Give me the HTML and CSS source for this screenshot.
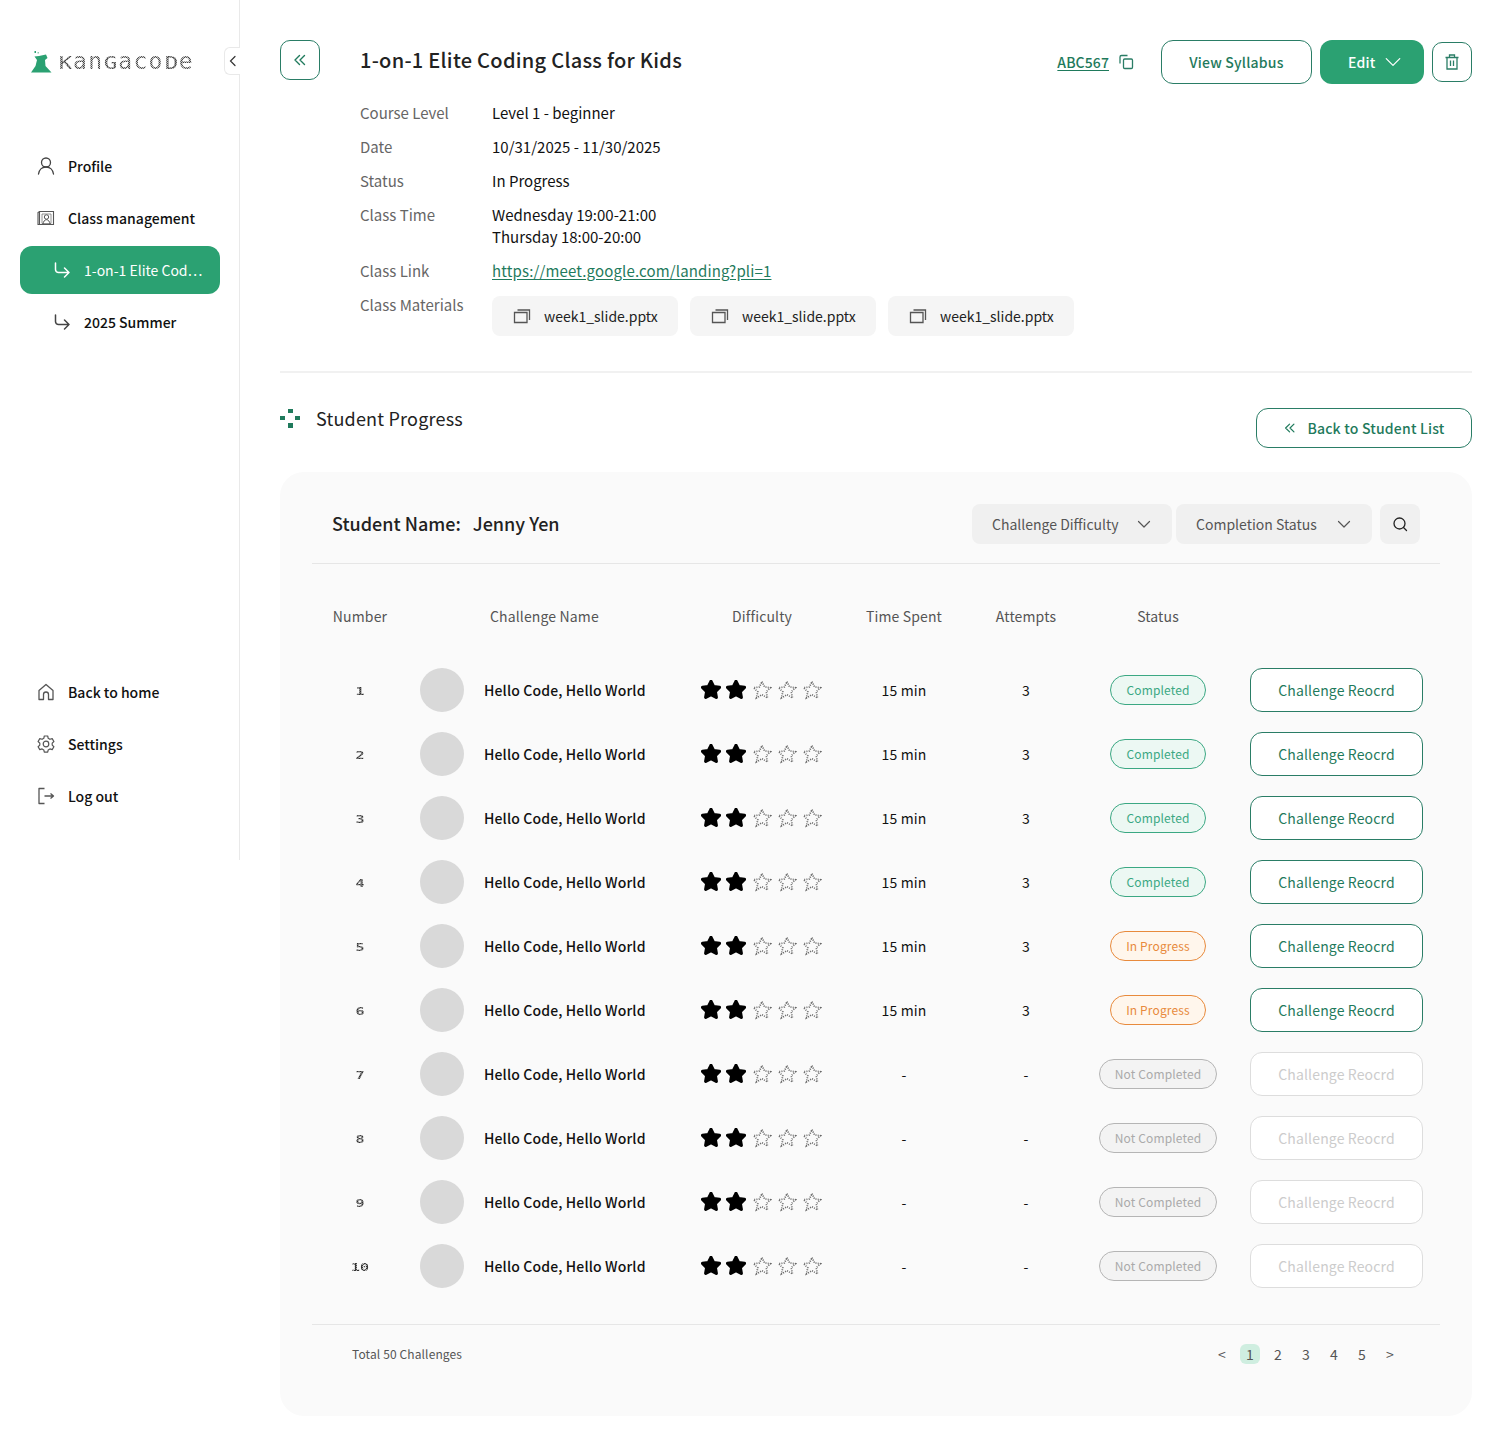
FILE: index.html
```html
<!DOCTYPE html>
<html lang="en">
<head>
<meta charset="utf-8">
<title>1-on-1 Elite Coding Class for Kids</title>
<link rel="stylesheet" href="styles.css">
</head>
<body>
<svg class="defs" width="0" height="0" aria-hidden="true">
  <symbol id="star-on" viewBox="1 1.500 22 22"><path d="M12 3l2.900 5.800 6.400.9-4.600 4.500 1.100 6.300L12 17.500l-5.800 3 1.100-6.300-4.600-4.500 6.400-.9z" fill="#000" stroke="#000" stroke-width="3.600" stroke-linejoin="round"/></symbol>
  <symbol id="star-off" viewBox="0 0 24 24"><path d="M12 2l3.100 6.300 7 1-5.100 4.900 1.700 7.300-6.700-3.800-6.700 3.800 1.700-7.300-5.100-4.900 7-1z" fill="none" stroke="#666" stroke-width="2" stroke-dasharray="1.200 1.500"/></symbol>
  <symbol id="sub" viewBox="0 0 20 20"><path d="M3.500 3v6.500a3 3 0 0 0 3 3H17M12.500 8l4.500 4.500-4.500 4.500" fill="none" stroke="currentColor" stroke-width="1.500" stroke-linecap="round" stroke-linejoin="round"/></symbol>
  <symbol id="double" viewBox="0 0 16 16"><path d="M7.500 3.500L3 8l4.500 4.500M12.500 3.500L8 8l4.500 4.500" fill="none" stroke="currentColor" stroke-width="1.400" stroke-linecap="round" stroke-linejoin="round"/></symbol>
  <symbol id="chev" viewBox="0 0 16 16"><path d="M2 5l6 6 6-6" fill="none" stroke="currentColor" stroke-width="1.100" stroke-linecap="round" stroke-linejoin="round"/></symbol>
  <symbol id="chev-sm" viewBox="0 0 16 16"><path d="M2.500 5.500L8 11l5.500-5.500" fill="none" stroke="currentColor" stroke-width="1.200" stroke-linecap="round" stroke-linejoin="round"/></symbol>
  <symbol id="file" viewBox="0 0 18 18"><path d="M1.500 5.500h12.500v10H1.500zM4.500 3h12v10" fill="none" stroke="#555" stroke-width="1.300"/></symbol>
</svg>

<aside class="sidebar">
  <button class="collapse" aria-label="Collapse"><svg width="10" height="12" viewBox="0 0 10 12"><path d="M7 1.500L2.500 6 7 10.500" fill="none" stroke="#333" stroke-width="1.200" stroke-linecap="round"/></svg></button>
  <div class="logo">
    <svg class="logo-mark" width="21" height="22" viewBox="0 0 21 22"><path d="M0 21.500L4.500 15 6 9 3.500 5.500 8 5 15 3.500 16.500 7 14 9 14.500 15 20.500 21.500z" fill="#2ba172"/><rect x="3.500" y="0" width="1.500" height="2" fill="#2ba172"/><rect x="6.500" y="1" width="1.500" height="1.500" fill="#8cc9ae"/></svg>
    <span class="logo-text"><b>K</b>an<b>G</b>aco<b>D</b>e</span>
  </div>
  <nav class="nav">
    <a class="nav-item"><svg class="nav-icon" viewBox="0 0 20 20"><circle cx="10" cy="6.500" r="4.500" fill="none" stroke="#444" stroke-width="1.300"/><path d="M2.500 18c.5-4 3.500-7 7.500-7s7 3 7.500 7" fill="none" stroke="#444" stroke-width="1.300" stroke-linecap="round"/></svg>Profile</a>
    <a class="nav-item"><svg class="nav-icon" viewBox="0 0 20 20"><path d="M3.500 3.500h14v13h-14zM3.500 3.500L2 4.500v12h1.500" fill="none" stroke="#555" stroke-width="1.100"/><path d="M6 6h9v9.500H6z" fill="none" stroke="#777" stroke-width=".8"/><circle cx="10.500" cy="9" r="2.200" fill="none" stroke="#555" stroke-width="1"/><path d="M7 16c.3-2.300 1.500-4.300 3.500-4.300s3.200 2 3.500 4.300" fill="none" stroke="#555" stroke-width="1"/></svg>Class management</a>
    <a class="nav-item sub active"><svg class="nav-icon"><use href="#sub"/></svg><span class="ellipsis">1-on-1 Elite Cod⋯</span></a>
    <a class="nav-item sub"><svg class="nav-icon muted"><use href="#sub"/></svg>2025 Summer</a>
  </nav>
  <nav class="nav nav-bottom">
    <a class="nav-item"><svg class="nav-icon" viewBox="0 0 20 20"><path d="M3 8.500L10 2.500l7 6v9h-4.500v-5a2.500 2.500 0 0 0-5 0v5H3z" fill="none" stroke="#555" stroke-width="1.300" stroke-linejoin="round"/></svg>Back to home</a>
    <a class="nav-item"><svg class="nav-icon" viewBox="0 0 20 20"><path d="M8.300 2h3.400l.5 2.300 1.700 1 2.300-.7 1.700 2.900-1.700 1.600v2l1.700 1.600-1.700 2.900-2.300-.7-1.700 1-.5 2.300H8.300l-.5-2.300-1.700-1-2.300.7-1.700-2.900 1.700-1.600v-2L2.100 7.500l1.700-2.900 2.300.7 1.700-1z" fill="none" stroke="#555" stroke-width="1.200" stroke-linejoin="round"/><circle cx="10" cy="10" r="2.800" fill="none" stroke="#555" stroke-width="1.200"/></svg>Settings</a>
    <a class="nav-item"><svg class="nav-icon" viewBox="0 0 20 20"><path d="M8.500 2.500H3v15h5.500M8.500 10h9M14.500 7.500l3 2.500-3 2.500" fill="none" stroke="#555" stroke-width="1.300" stroke-linejoin="round"/></svg>Log out</a>
  </nav>
</aside>

<main class="main">
  <header class="course-head">
    <button class="icon-btn back" aria-label="Back"><svg width="16" height="16"><use href="#double"/></svg></button>
    <h1 class="course-title">1-on-1 Elite Coding Class for Kids</h1>
    <div class="course-actions">
      <a class="code">ABC567</a>
      <svg class="copy" width="16" height="16" viewBox="0 0 16 16"><path d="M9.500 1.500h-6a1.500 1.500 0 0 0-1.500 1.500v6.500" fill="none" stroke="#2a7d66" stroke-width="1.300"/><rect x="5.500" y="5" width="9" height="9.500" rx="1.200" fill="none" stroke="#2a7d66" stroke-width="1.300"/></svg>
      <button class="btn btn-outline syllabus">View Syllabus</button>
      <button class="btn btn-fill edit">Edit<svg width="18" height="18"><use href="#chev"/></svg></button>
      <button class="icon-btn trash" aria-label="Delete"><svg width="18" height="18" viewBox="0 0 18 18"><path d="M2.500 4.500h13M6.500 4.500V2h5v2.500M4 4.500V16h10V4.500M7.500 7.500v5.500M10.500 7.500v5.500" fill="none" stroke="#2a7d66" stroke-width="1.300"/></svg></button>
    </div>
  </header>

  <dl class="details">
    <dt>Course Level</dt><dd>Level 1 - beginner</dd>
    <dt>Date</dt><dd>10/31/2025 - 11/30/2025</dd>
    <dt>Status</dt><dd>In Progress</dd>
    <dt>Class Time</dt><dd>Wednesday 19:00-21:00<br>Thursday 18:00-20:00</dd>
    <dt>Class Link</dt><dd><a class="link">https://meet.google.com/landing?pli=1</a></dd>
    <dt>Class Materials</dt>
    <dd class="materials">
      <a class="chip"><svg width="18" height="18"><use href="#file"/></svg>week1_slide.pptx</a>
      <a class="chip"><svg width="18" height="18"><use href="#file"/></svg>week1_slide.pptx</a>
      <a class="chip"><svg width="18" height="18"><use href="#file"/></svg>week1_slide.pptx</a>
    </dd>
  </dl>

  <hr class="rule">

  <div class="section-head">
    <h2 class="section-title"><svg width="20" height="20" viewBox="0 0 20 20"><g fill="#1f7a5c"><rect x="8" y="1" width="5" height="4"/><rect x="0" y="8" width="5" height="4"/><rect x="15" y="8" width="5" height="4"/><rect x="8" y="15" width="5" height="5"/></g></svg>Student Progress</h2>
    <button class="btn btn-outline back-list"><svg width="14" height="14"><use href="#double"/></svg>Back to Student List</button>
  </div>

  <section class="panel">
    <div class="panel-head">
      <div class="student"><span>Student Name:</span><span>Jenny Yen</span></div>
      <div class="filters">
        <button class="filter w200">Challenge Difficulty<svg width="16" height="16"><use href="#chev-sm"/></svg></button>
        <button class="filter w196">Completion Status<svg width="16" height="16"><use href="#chev-sm"/></svg></button>
        <button class="filter search" aria-label="Search"><svg width="16" height="16" viewBox="0 0 16 16"><circle cx="7.500" cy="7.500" r="5.500" fill="none" stroke="#222" stroke-width="1.300"/><path d="M11.500 11.500L14.500 14.500" stroke="#222" stroke-width="1.300" stroke-linecap="round"/></svg></button>
      </div>
    </div>

    <div class="grid thead">
      <span class="c">Number</span><span></span><span class="th-name">Challenge Name</span><span class="th-diff">Difficulty</span><span class="c">Time Spent</span><span class="c">Attempts</span><span class="c">Status</span><span></span>
    </div>

    <div class="rows">
      <div class="grid row"><span class="pixel c"><i>1</i></span><span class="avatar"></span><span class="name">Hello Code, Hello World</span><span class="stars"><svg><use href="#star-on"/></svg><svg><use href="#star-on"/></svg><svg><use href="#star-off"/></svg><svg><use href="#star-off"/></svg><svg><use href="#star-off"/></svg></span><span class="val c">15 min</span><span class="val c">3</span><span class="c"><em class="pill done">Completed</em></span><a class="record">Challenge Reocrd</a></div>
      <div class="grid row"><span class="pixel c"><i>2</i></span><span class="avatar"></span><span class="name">Hello Code, Hello World</span><span class="stars"><svg><use href="#star-on"/></svg><svg><use href="#star-on"/></svg><svg><use href="#star-off"/></svg><svg><use href="#star-off"/></svg><svg><use href="#star-off"/></svg></span><span class="val c">15 min</span><span class="val c">3</span><span class="c"><em class="pill done">Completed</em></span><a class="record">Challenge Reocrd</a></div>
      <div class="grid row"><span class="pixel c"><i>3</i></span><span class="avatar"></span><span class="name">Hello Code, Hello World</span><span class="stars"><svg><use href="#star-on"/></svg><svg><use href="#star-on"/></svg><svg><use href="#star-off"/></svg><svg><use href="#star-off"/></svg><svg><use href="#star-off"/></svg></span><span class="val c">15 min</span><span class="val c">3</span><span class="c"><em class="pill done">Completed</em></span><a class="record">Challenge Reocrd</a></div>
      <div class="grid row"><span class="pixel c"><i>4</i></span><span class="avatar"></span><span class="name">Hello Code, Hello World</span><span class="stars"><svg><use href="#star-on"/></svg><svg><use href="#star-on"/></svg><svg><use href="#star-off"/></svg><svg><use href="#star-off"/></svg><svg><use href="#star-off"/></svg></span><span class="val c">15 min</span><span class="val c">3</span><span class="c"><em class="pill done">Completed</em></span><a class="record">Challenge Reocrd</a></div>
      <div class="grid row"><span class="pixel c"><i>5</i></span><span class="avatar"></span><span class="name">Hello Code, Hello World</span><span class="stars"><svg><use href="#star-on"/></svg><svg><use href="#star-on"/></svg><svg><use href="#star-off"/></svg><svg><use href="#star-off"/></svg><svg><use href="#star-off"/></svg></span><span class="val c">15 min</span><span class="val c">3</span><span class="c"><em class="pill prog">In Progress</em></span><a class="record">Challenge Reocrd</a></div>
      <div class="grid row"><span class="pixel c"><i>6</i></span><span class="avatar"></span><span class="name">Hello Code, Hello World</span><span class="stars"><svg><use href="#star-on"/></svg><svg><use href="#star-on"/></svg><svg><use href="#star-off"/></svg><svg><use href="#star-off"/></svg><svg><use href="#star-off"/></svg></span><span class="val c">15 min</span><span class="val c">3</span><span class="c"><em class="pill prog">In Progress</em></span><a class="record">Challenge Reocrd</a></div>
      <div class="grid row"><span class="pixel c"><i>7</i></span><span class="avatar"></span><span class="name">Hello Code, Hello World</span><span class="stars"><svg><use href="#star-on"/></svg><svg><use href="#star-on"/></svg><svg><use href="#star-off"/></svg><svg><use href="#star-off"/></svg><svg><use href="#star-off"/></svg></span><span class="val c">-</span><span class="val c">-</span><span class="c"><em class="pill none">Not Completed</em></span><a class="record off">Challenge Reocrd</a></div>
      <div class="grid row"><span class="pixel c"><i>8</i></span><span class="avatar"></span><span class="name">Hello Code, Hello World</span><span class="stars"><svg><use href="#star-on"/></svg><svg><use href="#star-on"/></svg><svg><use href="#star-off"/></svg><svg><use href="#star-off"/></svg><svg><use href="#star-off"/></svg></span><span class="val c">-</span><span class="val c">-</span><span class="c"><em class="pill none">Not Completed</em></span><a class="record off">Challenge Reocrd</a></div>
      <div class="grid row"><span class="pixel c"><i>9</i></span><span class="avatar"></span><span class="name">Hello Code, Hello World</span><span class="stars"><svg><use href="#star-on"/></svg><svg><use href="#star-on"/></svg><svg><use href="#star-off"/></svg><svg><use href="#star-off"/></svg><svg><use href="#star-off"/></svg></span><span class="val c">-</span><span class="val c">-</span><span class="c"><em class="pill none">Not Completed</em></span><a class="record off">Challenge Reocrd</a></div>
      <div class="grid row"><span class="pixel c"><i>10</i></span><span class="avatar"></span><span class="name">Hello Code, Hello World</span><span class="stars"><svg><use href="#star-on"/></svg><svg><use href="#star-on"/></svg><svg><use href="#star-off"/></svg><svg><use href="#star-off"/></svg><svg><use href="#star-off"/></svg></span><span class="val c">-</span><span class="val c">-</span><span class="c"><em class="pill none">Not Completed</em></span><a class="record off">Challenge Reocrd</a></div>
    </div>

    <footer class="panel-foot">
      <span class="total">Total 50 Challenges</span>
      <div class="pages">
        <a>&lt;</a><a class="current">1</a><a>2</a><a>3</a><a>4</a><a>5</a><a>&gt;</a>
      </div>
    </footer>
  </section>
</main>
</body>
</html>
```

FILE: styles.css
```css
* { box-sizing: border-box; }
html, body { margin: 0; padding: 0; }
body {
  display: flex;
  align-items: flex-start;
  width: 1512px;
  min-height: 1444px;
  background: #fff;
  color: #111;
  font-family: "Noto Sans CJK TC", "Noto Sans", sans-serif;
  font-size: 14px;
  line-height: 21px;
}
button { font: inherit; cursor: pointer; background: none; border: 0; padding: 0; }
h1, h2, dl, dd { margin: 0; }
.defs { position: absolute; }

/* sidebar */
.sidebar {
  position: relative;
  flex: 0 0 240px;
  height: 860px;
  display: flex;
  flex-direction: column;
  padding: 50px 19px 40px 20px;
  border-right: 1px solid #e9e9e9;
}
.collapse {
  position: absolute;
  top: 47px;
  right: -1px;
  width: 16px;
  height: 28px;
  display: flex;
  align-items: center;
  justify-content: center;
  background: #fff;
  border: 1px solid #e9e9e9;
  border-right: 0;
  border-radius: 6px 0 0 6px;
}
.logo { display: flex; align-items: center; height: 24px; padding-left: 11px; gap: 6px; }
.logo-mark { flex: none; }
.logo-text {
  display: inline-block;
  font-family: "DejaVu Sans Mono", monospace;
  font-size: 23px;
  line-height: 22px;
  letter-spacing: 1.3px;
  white-space: nowrap;
  background: repeating-conic-gradient(#444 0 25%, #c4c4c4 0 50%) 0 0 / 2px 2px;
  -webkit-background-clip: text;
  background-clip: text;
  -webkit-text-fill-color: transparent;
}
.logo-text b {
  display: inline-block;
  width: 15px;
  font-size: 18px;
  font-weight: 400;
  letter-spacing: 0;
  text-align: center;
  transform: scaleX(1.25);
  background: repeating-conic-gradient(#444 0 25%, #c4c4c4 0 50%) 0 0 / 2px 2px;
  -webkit-background-clip: text;
  background-clip: text;
  -webkit-text-fill-color: transparent;
}
.nav { display: flex; flex-direction: column; gap: 4px; margin-top: 68px; }
.nav-bottom { margin-top: auto; }
.nav-item {
  display: flex;
  align-items: center;
  height: 48px;
  padding-left: 16px;
  gap: 12px;
  border-radius: 12px;
  font-weight: 500;
  color: #111;
}
.nav-item.sub { padding-left: 32px; }
.nav-icon { width: 20px; height: 20px; flex: none; }
.nav-icon.muted { color: #444; }
.nav-item.active { background: #2ba172; color: #fff; font-weight: 400; }
.ellipsis { white-space: nowrap; }

/* course header */
.main { flex: 1; min-width: 0; padding: 40px 40px 28px; }
.course-head { display: flex; align-items: flex-start; }
.icon-btn {
  display: flex;
  align-items: center;
  justify-content: center;
  width: 40px;
  height: 40px;
  flex: none;
  color: #1f7a5c;
  background: #fff;
  border: 1px solid #2a7d66;
  border-radius: 10px;
}
.course-title { margin-left: 40px; font-size: 20px; font-weight: 500; letter-spacing: .28px; line-height: 40px; color: #222; }
.course-actions { display: flex; align-items: center; margin-left: auto; height: 44px; }
.code {
  font-weight: 500;
  letter-spacing: .1px;
  color: #1f7a5c;
  text-decoration: underline;
  text-underline-offset: 2px;
}
.copy { margin: 0 27px 0 9px; }
.btn {
  display: flex;
  align-items: center;
  justify-content: center;
  height: 44px;
  border-radius: 12px;
  font-weight: 500;
  letter-spacing: .2px;
}
.btn-outline { color: #1f7a5c; background: #fff; border: 1px solid #2a7d66; }
.btn-fill { color: #fff; background: #2ba172; }
.syllabus { width: 151px; }
.edit { width: 104px; margin-left: 8px; gap: 9px; justify-content: flex-start; padding-left: 28px; }
.trash { margin-left: 8px; }

/* details */
.details {
  display: grid;
  grid-template-columns: 132px 1fr;
  row-gap: 12px;
  margin-top: 18px;
  padding-left: 80px;
  font-size: 15px;
  line-height: 22px;
  color: #111;
}
.details dt { color: #666; }
.link { color: #1f7a5c; letter-spacing: .15px; text-decoration: underline; text-underline-offset: 2px; }
.materials { display: flex; gap: 12px; margin-top: 2px; }
.chip {
  display: flex;
  align-items: center;
  gap: 13px;
  width: 186px;
  height: 40px;
  padding-left: 21px;
  background: #f5f5f5;
  border-radius: 8px;
  font-size: 14px;
  color: #222;
}
.rule { height: 2px; margin: 35px 0 0; border: 0; background: #f1f1f1; }

/* section */
.section-head { display: flex; justify-content: space-between; align-items: flex-start; margin-top: 35px; }
.section-title { display: flex; align-items: center; gap: 16px; font-size: 18px; font-weight: 400; letter-spacing: .2px; line-height: 20px; color: #222; }
.back-list { width: 216px; height: 40px; gap: 10px; }

/* panel */
.panel {
  height: 944px;
  margin-top: 24px;
  padding: 32px;
  background: #fafafa;
  border-radius: 24px;
}
.panel-head {
  display: flex;
  justify-content: space-between;
  align-items: center;
  height: 60px;
  padding: 0 20px 20px;
  border-bottom: 1px solid #e6e6e6;
}
.student { display: flex; gap: 12px; padding-bottom: 2px; font-size: 18px; font-weight: 500; line-height: 22px; color: #222; }
.filters { display: flex; gap: 4px; }
.filter {
  display: flex;
  align-items: center;
  justify-content: space-between;
  height: 40px;
  padding: 0 20px;
  background: #f0f0f0;
  border-radius: 8px;
  line-height: 22px;
  color: #555;
}
.w200 { width: 200px; }
.w196 { width: 196px; }
.search { width: 40px; margin-left: 4px; padding: 0; justify-content: center; }

/* table */
.grid {
  display: grid;
  grid-template-columns: 96px 76px 216px 130px 148px 96px 168px 198px;
  align-items: center;
  letter-spacing: .01em;
}
.c { text-align: center; }
.thead { margin-top: 41px; height: 22px; color: #555; }
.th-name { padding-left: 6px; }
.th-diff { padding-left: 32px; }
.rows { display: flex; flex-direction: column; gap: 20px; margin-top: 41px; }
.row { height: 44px; color: #111; font-weight: 500; }
.row > .c { font-weight: 400; }
.avatar { display: block; width: 44px; height: 44px; margin-left: 12px; border-radius: 50%; background: #d9d9d9; }
.row > .pixel { padding-top: 2px; font-family: "DejaVu Sans Mono", monospace; font-size: 10px; font-weight: 700; letter-spacing: 0; }
.pixel i {
  display: inline-block;
  font-style: normal;
  transform: scaleX(1.5);
  background: repeating-conic-gradient(#333 0 25%, #aaa 0 50%) 0 0 / 2px 2px;
  -webkit-background-clip: text;
  background-clip: text;
  -webkit-text-fill-color: transparent;
}
.stars { display: flex; gap: 5.300px; padding-left: 1px; height: 20px; }
.stars svg { width: 20px; height: 20px; flex: none; }
.pill {
  display: inline-block;
  padding: 0 15px;
  height: 30px;
  border: 1px solid;
  border-radius: 15px;
  font-style: normal;
  font-size: 12px;
  line-height: 28px;
  vertical-align: middle;
}
.done { color: #3ba883; border-color: #3ba883; background: #ecf8f3; }
.prog { color: #e88a3c; border-color: #e88a3c; background: #fff6ec; }
.none { color: #aaa; border-color: #b5b5b5; background: #f3f3f3; }
.record {
  display: flex;
  align-items: center;
  justify-content: center;
  width: 173px;
  height: 44px;
  margin-left: 8px;
  background: #fff;
  border: 1px solid #2a7d66;
  border-radius: 12px;
  color: #1f7a5c;
  font-weight: 400;
}
.record.off { border-color: #ddd; color: #ccc; }

/* footer */
.panel-foot {
  display: flex;
  justify-content: space-between;
  align-items: center;
  margin-top: 36px;
  padding: 19px 40px 0;
  border-top: 1px solid #e6e6e6;
}
.total { font-size: 12px; letter-spacing: .12px; line-height: 20px; color: #555; }
.pages { display: flex; gap: 8px; }
.pages a { width: 20px; height: 20px; font-size: 14px; line-height: 20px; text-align: center; color: #555; border-radius: 6px; }
.pages .current { background: #cfeee0; }
```
